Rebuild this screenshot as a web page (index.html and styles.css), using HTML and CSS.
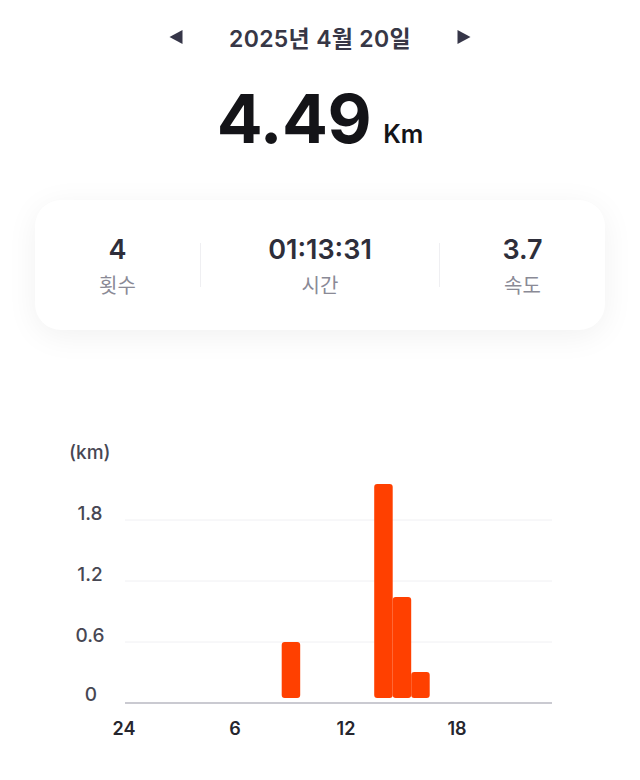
FILE: index.html
```html
<!DOCTYPE html>
<html lang="ko">

<head>
    <meta charset="UTF-8">
    <meta name="viewport" content="width=device-width, initial-scale=1.0">
    <title>일일 기록</title>
    <link rel="stylesheet" href="styles.css">
</head>

<body>
    <div class="date-nav">
        <button class="nav-btn" aria-label="이전 날">
            <svg width="16" height="16" viewBox="0 0 16 16"><polygon points="1.5,8 14.5,1 14.5,15" /></svg>
        </button>
        <h2 class="date">2025년 4월 20일</h2>
        <button class="nav-btn" aria-label="다음 날">
            <svg width="16" height="16" viewBox="0 0 16 16"><polygon points="14.5,8 1.5,1 1.5,15" /></svg>
        </button>
    </div>

    <div class="total">
        <span class="total-value">4.49</span>
        <span class="total-unit">Km</span>
    </div>

    <div class="summary-card">
        <div class="stat">
            <div class="stat-value">4</div>
            <div class="stat-label">횟수</div>
        </div>
        <div class="divider"></div>
        <div class="stat">
            <div class="stat-value">01:13:31</div>
            <div class="stat-label">시간</div>
        </div>
        <div class="divider"></div>
        <div class="stat">
            <div class="stat-value">3.7</div>
            <div class="stat-label">속도</div>
        </div>
    </div>

    <div class="chart">
        <svg class="chart-svg" width="640" height="340" viewBox="0 0 640 340">
            <text class="unit-label" x="69" y="39">(km)</text>

            <line class="grid" x1="125" y1="100" x2="552" y2="100" />
            <line class="grid" x1="125" y1="161" x2="552" y2="161" />
            <line class="grid" x1="125" y1="222" x2="552" y2="222" />

            <text class="y-label" x="90" y="100">1.8</text>
            <text class="y-label" x="90" y="161">1.2</text>
            <text class="y-label" x="90" y="222">0.6</text>
            <text class="y-label" x="91" y="281">0</text>

            <!-- hourly bars, 18.5px per hour -->
            <rect class="bar" x="281.7" y="222" width="18.5" height="56" rx="3" />
            <rect class="bar" x="374.2" y="64" width="18.5" height="214" rx="3" />
            <rect class="bar" x="392.7" y="177" width="18.5" height="101" rx="3" />
            <rect class="bar" x="411.2" y="252" width="18.5" height="26" rx="3" />

            <line class="axis" x1="125" y1="283" x2="552" y2="283" />

            <text class="x-label" x="124" y="315">24</text>
            <text class="x-label" x="235" y="315">6</text>
            <text class="x-label" x="346" y="315">12</text>
            <text class="x-label" x="457" y="315">18</text>
        </svg>
    </div>
</body>

</html>
```

FILE: styles.css
```css
* {
    margin: 0;
    padding: 0;
    box-sizing: border-box;
    font-family: Inter, 'Noto Sans CJK KR', sans-serif;
}

body {
    background-color: #ffffff;
    width: 640px;
}

.date-nav {
    display: flex;
    justify-content: center;
    align-items: center;
    gap: 45px;
    height: 74px;
}

.nav-btn {
    background: none;
    border: none;
    display: flex;
    cursor: pointer;
}

.nav-btn svg {
    fill: #363648;
}

.date {
    font-size: 23px;
    font-weight: 600;
    color: #373746;
    letter-spacing: 0.3px;
}

.total {
    display: flex;
    justify-content: center;
    align-items: baseline;
    gap: 12px;
    height: 80px;
    margin-top: 4px;
}

.total-value {
    font-size: 68px;
    font-weight: 700;
    color: #141418;
    line-height: 80px;
    letter-spacing: -0.5px;
}

.total-unit {
    font-size: 25px;
    font-weight: 600;
    color: #141418;
}

.summary-card {
    display: grid;
    grid-template-columns: 1fr 1px 238px 1px 1fr;
    align-items: center;
    height: 130px;
    margin: 42px 35px 0;
    background-color: white;
    border-radius: 26px;
    box-shadow: 0 6px 32px rgba(0, 0, 0, 0.06);
}

.stat {
    display: flex;
    flex-direction: column;
    align-items: center;
    gap: 8px;
    padding-top: 4px;
}

.stat-value {
    font-size: 27px;
    font-weight: 600;
    color: #2e2e3a;
    line-height: 30px;
}

.stat-label {
    font-size: 20px;
    color: #8a8a96;
    line-height: 26px;
}

.divider {
    height: 44px;
    background-color: #efeff2;
}

.chart {
    margin-top: 90px;
}

.chart-svg {
    display: block;
}

.chart-svg text {
    font-family: Inter, sans-serif;
}

.unit-label {
    font-size: 19px;
    font-weight: 500;
    fill: #474753;
}

.y-label {
    font-size: 19px;
    font-weight: 500;
    fill: #474753;
    text-anchor: middle;
}

.x-label {
    font-size: 18px;
    font-weight: 600;
    fill: #26262e;
    text-anchor: middle;
}

.grid {
    stroke: #f0f0f3;
    stroke-width: 1;
}

.axis {
    stroke: #b9b9c2;
    stroke-width: 1.5;
}

.bar {
    fill: #ff4000;
}
```
